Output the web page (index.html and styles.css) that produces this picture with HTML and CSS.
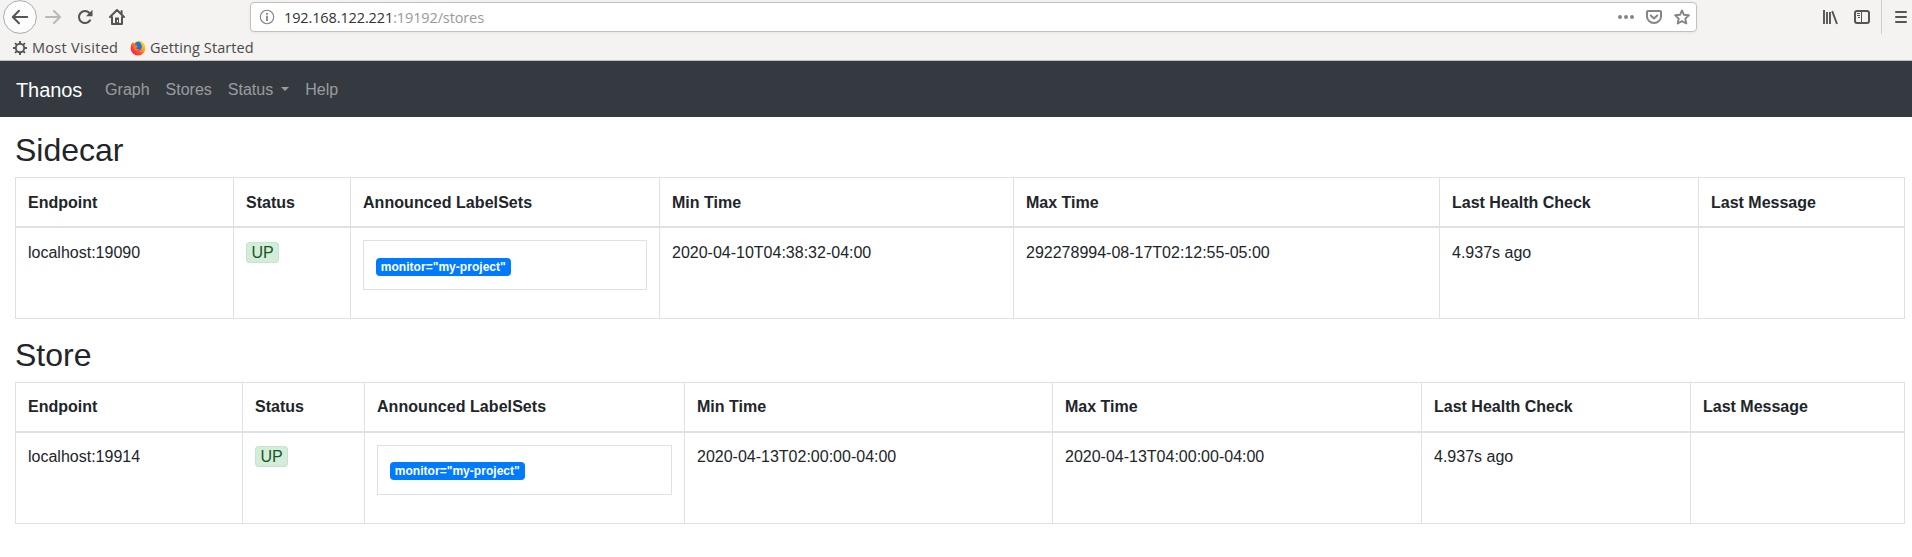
FILE: index.html
```
<!DOCTYPE html>
<html lang="en">
<head>
<meta charset="utf-8">
<title>Thanos Stores</title>
<link rel="stylesheet" href="styles.css">
</head>
<body>
<header class="browser">
  <div class="toolbar">
    <svg class="back" width="34" height="34" viewBox="0 0 34 34"><circle cx="17" cy="17" r="16.4" fill="#fcfcfc" stroke="#adaba9"/><path d="M24.2 17H10.5M16 10.8L9.8 17l6.2 6.2" fill="none" stroke="#555553" stroke-width="2" stroke-linecap="round" stroke-linejoin="round"/></svg>
    <svg class="forward" width="16" height="16" viewBox="0 0 16 16"><path d="M1 8h13.5M9 2l6 6-6 6" fill="none" stroke="#b9b8b6" stroke-width="2" stroke-linecap="round" stroke-linejoin="round"/></svg>
    <svg class="reload" width="16" height="16" viewBox="0 0 16 16"><path d="M13 11.4A6 6 0 1 1 12.4 4" fill="none" stroke="#555553" stroke-width="2" stroke-linecap="round"/><path d="M15.5 .8v6.4H9z" fill="#555553"/></svg>
    <svg class="home" width="16" height="16" viewBox="0 0 16 16"><path d="M1 8l7-7 7 7M3 8v7h10V8M12.6 5V2" fill="none" stroke="#555553" stroke-width="2" stroke-linecap="round" stroke-linejoin="round"/><path d="M6 8.5h4V15H6z" fill="#555553"/><path d="M8 11h1v2H8z" fill="#fff"/></svg>
    <div class="urlbar">
      <svg width="16" height="16" viewBox="0 0 16 16"><circle cx="8" cy="8" r="6.7" fill="none" stroke="#858585" stroke-width="1.1"/><path d="M8 6.8V12M8 4v1.8" stroke="#858585" stroke-width="1.8"/></svg>
      <span class="url">192.168.122.221<span class="path">:19192/stores</span></span>
      <svg class="dots" width="16" height="16" viewBox="0 0 16 16" fill="#858585"><circle cx="2" cy="8" r="2"/><circle cx="8" cy="8" r="2"/><circle cx="14" cy="8" r="2"/></svg>
      <svg class="pocket" width="16" height="16" viewBox="0 0 16 16" fill="none" stroke="#858585" stroke-width="2" stroke-linejoin="round" stroke-linecap="round"><path d="M2 2h12q1 0 1 1v4.500a7 6.500 0 0 1-14 0V3q0-1 1-1z"/><path d="M4.800 6.500L8 9.500l3.200-3"/></svg>
      <svg class="star" width="16" height="16" viewBox="0 0 16 16"><path d="M8 1.500l2 4.300 4.900.5-3.600 3.300 1 4.900L8 12.200l-4.300 2.300 1-4.900L1.100 6.300 6 5.800z" fill="none" stroke="#858585" stroke-width="1.900" stroke-linejoin="round"/></svg>
    </div>
    <svg class="library" width="16" height="16" viewBox="0 0 16 16" fill="none" stroke="#555553"><path d="M2 1v14M10.200 2.200L15 15" stroke-width="1.900"/><path d="M5 3v12M8 3v12" stroke-width="1.900"/></svg>
    <svg class="sidebar" width="16" height="16" viewBox="0 0 16 16" fill="none" stroke="#555553"><rect x="1" y="2" width="14" height="12" rx="2" stroke-width="2"/><path d="M7.500 2v12M3 4.500h3M3 6.500h3M4 8.500h2"/></svg>
    <span class="divider"></span>
    <svg class="menu" width="12" height="14" viewBox="0 0 12 14"><path d="M1 2h10M1 7h10M1 12h10" stroke="#555553" stroke-width="2" stroke-linecap="round"/></svg>
  </div>
  <div class="bookmarks">
    <svg width="14" height="14" viewBox="0 0 14 14" fill="none" stroke="#555553"><circle cx="7" cy="7" r="4.200" stroke-width="1.900"/><path d="M7 0v2.800M7 11.200V14M0 7h2.800M11.200 7H14M2.050 2.050l2 2M9.950 9.950l2 2M2.050 11.950l2-2M9.950 4.050l2-2" stroke-width="1.900"/></svg>
    <span class="mark visited">Most Visited</span>
    <svg class="fox" width="16" height="16" viewBox="0 0 16 16"><defs><linearGradient id="f" x1="1" y1="0" x2="0" y2="1"><stop offset="0" stop-color="#fff44f"/><stop offset=".35" stop-color="#ffa722"/><stop offset=".65" stop-color="#ff4530"/><stop offset="1" stop-color="#e9126b"/></linearGradient></defs><path d="M2.500 2.200L4 3.600Q6 .8 9.500.7q5.800 1.600 5.900 7.300A7.400 7.400 0 0 1 .6 8.300Q.6 4.800 2.500 2.200z" fill="url(#f)"/><path d="M4.800 4Q8-.1 10.800 3.200q1.800 3.500.5 5.600-1.500 2.300-4.300 1.600 1.500-.3 2-1.400-2.800.3-3.600-1.200L7.600 7 6.900 5.700z" fill="#1675d8"/><path d="M4.200 5.500l2.900.3.7 1-1.900 1.300q.8 1.500 3.200 1-2 2.700-4.800.5z" fill="#ff7a18"/></svg>
    <span class="mark started">Getting Started</span>
  </div>
</header>
<nav class="navbar">
  <a class="brand">Thanos</a>
  <a class="link">Graph</a>
  <a class="link">Stores</a>
  <a class="link caret">Status</a>
  <a class="link">Help</a>
</nav>
<main>
  <h2>Sidecar</h2>
  <table class="stores first">
    <colgroup><col class="s1"><col class="s2"><col class="s3"><col class="s4"><col class="s5"><col class="s6"><col class="s7"></colgroup>
    <thead><tr><th>Endpoint</th><th>Status</th><th class="labels">Announced LabelSets</th><th>Min Time</th><th>Max Time</th><th>Last Health Check</th><th>Last Message</th></tr></thead>
    <tbody><tr><td>localhost:19090</td><td><span class="up">UP</span></td><td><div class="labelset"><span class="badge">monitor="my-project"</span></div></td><td>2020-04-10T04:38:32-04:00</td><td>292278994-08-17T02:12:55-05:00</td><td>4.937s ago</td><td></td></tr></tbody>
  </table>
  <h2>Store</h2>
  <table class="stores">
    <colgroup><col class="t1"><col class="t2"><col class="t3"><col class="t4"><col class="t5"><col class="t6"><col class="t7"></colgroup>
    <thead><tr><th>Endpoint</th><th>Status</th><th class="labels">Announced LabelSets</th><th>Min Time</th><th>Max Time</th><th>Last Health Check</th><th>Last Message</th></tr></thead>
    <tbody><tr><td>localhost:19914</td><td><span class="up">UP</span></td><td><div class="labelset"><span class="badge">monitor="my-project"</span></div></td><td>2020-04-13T02:00:00-04:00</td><td>2020-04-13T04:00:00-04:00</td><td>4.937s ago</td><td></td></tr></tbody>
  </table>
</main>
</body>
</html>
```
FILE: styles.css
```
* { box-sizing: border-box; }
body {
  margin: 0;
  background: #fff;
  color: #212529;
  font: 16px/24px "Liberation Sans", Arial, sans-serif;
  overflow: hidden;
}
svg { display: block; flex: none; }

.browser {
  height: 61px;
  background: #f4f3f1;
  border-bottom: 1px solid #c3c0bd;
  font-family: "Open Sans", "Noto Sans", sans-serif;
  color: #4a4a48;
}
.toolbar { display: flex; align-items: center; height: 34px; padding-left: 3px; }
.forward { margin-left: 8px; }
.reload { margin-left: 16px; }
.home { margin-left: 16px; }
.urlbar {
  display: flex;
  align-items: center;
  width: 1447px;
  height: 30px;
  margin-left: 125px;
  padding: 0 6px 0 8px;
  background: #fff;
  border: 1px solid #c3c1be;
  border-radius: 4px;
  box-shadow: 0 1px 3px rgba(0, 0, 0, .06);
}
.url { margin-left: 9px; padding-top: 1px; font-size: 14.5px; color: #333; letter-spacing: -.12px; flex: 1; white-space: nowrap; }
.path { color: #999; }
.pocket, .star { margin-left: 12px; }
.library { margin-left: 125px; }
.sidebar { margin-left: 16px; }
.divider { align-self: flex-start; width: 1px; height: 34px; margin-left: 11px; background: #d0cecb; }
.menu { margin-left: 13px; }
.bookmarks { display: flex; align-items: center; height: 26px; padding: 2px 0 0 13px; font-size: 14.5px; }
.mark { white-space: nowrap; }
.visited { width: 85px; margin-left: 5px; letter-spacing: .3px; }
.fox { margin-left: 13px; }
.started { margin-left: 4px; letter-spacing: .08px; }

.navbar { display: flex; align-items: center; height: 56px; padding: 1px 16px 0; background: #343a40; }
.brand { margin-right: 15px; font-size: 20px; line-height: 30px; letter-spacing: -.1px; color: #fff; }
.link { padding: 1px 8px 0; color: rgba(255, 255, 255, .5); }
.caret::after {
  content: "";
  display: inline-block;
  margin-left: 8px;
  vertical-align: 4px;
  border-top: 4.8px solid;
  border-right: 4.8px solid transparent;
  border-left: 4.8px solid transparent;
}

main { padding: 14px 7px 0 15px; }
h2 { margin: 0 0 8px; font-size: 32px; font-weight: 500; line-height: 38px; }
.stores { width: 1890px; margin-bottom: 17px; table-layout: fixed; border-collapse: collapse; }
th, td { padding: 12px; border: 1px solid #dee2e6; text-align: left; vertical-align: top; }
th { border-bottom-width: 2px; }
.labels { letter-spacing: .06px; }
.first th, .first td { padding-top: 13px; padding-bottom: 11px; }
.s1 { width: 218px; } .s2 { width: 117px; } .s3 { width: 309px; } .s4 { width: 354px; }
.s5 { width: 426px; } .s6 { width: 259px; } .s7 { width: 206px; }
.t1 { width: 227px; } .t2 { width: 122px; } .t3 { width: 320px; } .t4 { width: 368px; }
.t5 { width: 369px; } .t6 { width: 269px; } .t7 { width: 214px; }
.up {
  padding: 1px 4.4px;
  color: #155724;
  background: #d4edda;
  border: 1px solid #c3e6cb;
  border-radius: 4px;
}
.labelset { height: 50px; margin-bottom: 16px; padding: 12px; border: 1px solid #dee2e6; }
.first .labelset { margin: -1px 0 17px; padding-top: 13px; }
.badge {
  display: inline-block;
  padding: 3px 4.8px;
  font-size: 12px;
  font-weight: 700;
  line-height: 12px;
  letter-spacing: .03px;
  color: #fff;
  background: #007bff;
  border-radius: 4px;
  vertical-align: baseline;
}
```
